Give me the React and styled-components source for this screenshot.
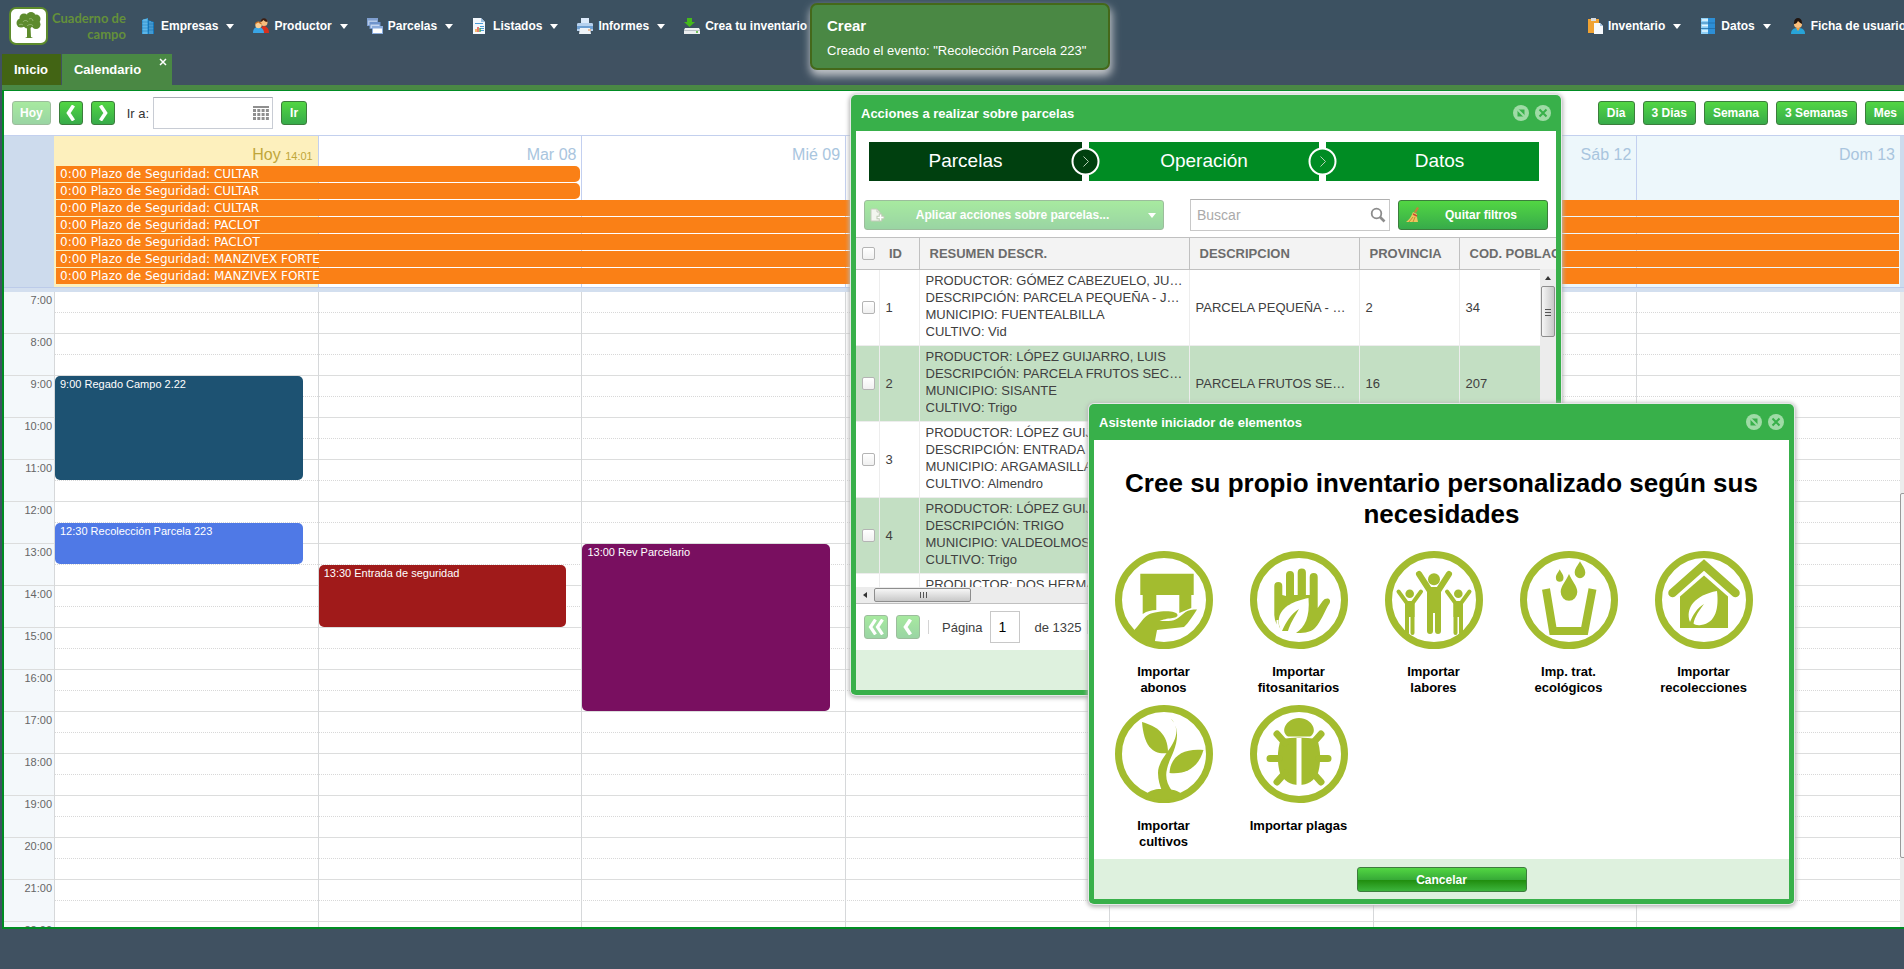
import React from 'react'
import styled, { createGlobalStyle } from 'styled-components'

const GlobalStyle = createGlobalStyle`
  * {
    box-sizing: border-box;
  }
  body {
    margin: 0;
    overflow: hidden;
    background: #405161;
    font-family: "Liberation Sans", Arial, sans-serif;
    font-size: 13px;
  }
  button, input {
    font-family: inherit;
  }
  button {
    cursor: pointer;
  }
`

/* ---------- layout ---------- */

const Page = styled.div`
  width: calc(100% + 15px);
  height: 100vh;
  display: flex;
  flex-direction: column;
  padding-bottom: 40px;
`

const Header = styled.header`
  display: flex;
  align-items: center;
  height: 50px;
  flex: none;
  padding: 2px 13px 0 9px;
  background: #3c5161;
`

const Logo = styled.a`
  display: flex;
  align-items: center;
  gap: 4px;
  width: 131px;
  color: #64903a;
  text-decoration: none;
  text-align: right;
  span {
    font-family: Lato, sans-serif;
    font-size: 13px;
    font-weight: bold;
    line-height: 16px;
    white-space: nowrap;
  }
`

const Menu = styled.nav`
  display: flex;
  gap: 19px;
  &:last-child {
    margin-left: auto;
  }
`

const MenuButton = styled.button`
  display: flex;
  align-items: center;
  height: 24px;
  padding: 0;
  border: 0;
  background: none;
  color: #fff;
  font-size: 12px;
  font-weight: bold;
  white-space: nowrap;
  svg {
    margin-right: 5px;
  }
`

const Arrow = styled.span`
  margin-left: 8px;
  border: 4px solid transparent;
  border-top: 5px solid #fff;
  border-bottom: 0;
`

const Tabs = styled.div`
  display: flex;
  align-items: flex-end;
  gap: 1px;
  height: 40px;
  flex: none;
  margin-left: 2px;
  border-bottom: 5px solid #4a8844;
`

const Tab = styled.button`
  display: flex;
  height: 31px;
  padding: 0 13px 0 12px;
  border: 0;
  background: ${(props) => (props.$active ? '#4a8844' : '#426414')};
  color: #fff;
  font-size: 13px;
  font-weight: bold;
  line-height: 31px;
  svg {
    margin: 4px -8px 0 18px;
  }
`

const Panel = styled.main`
  flex: 1;
  min-height: 0;
  display: flex;
  flex-direction: column;
  margin-left: 2px;
  border: 2px solid #008c23;
  border-top-width: 1px;
  background: #fff;
  overflow: hidden;
`

/* ---------- controls ---------- */

const Button = styled.button`
  display: flex;
  align-items: center;
  justify-content: center;
  height: ${(props) => (props.$tall ? 30 : 24)}px;
  min-width: 24px;
  padding: 0 ${(props) => (props.$icon ? 0 : 8)}px;
  border: 1px solid #3c7d3c;
  border-radius: 3px;
  background: linear-gradient(#52d643, #37ab4a);
  color: #fff;
  font-size: 12px;
  font-weight: bold;
  white-space: nowrap;
  opacity: ${(props) => (props.disabled ? 0.5 : 1)};
`

const TodayButton = styled(Button)`
  padding: 0 7px;
`

const Toolbar = styled.div`
  display: flex;
  align-items: center;
  gap: 8px;
  height: 44px;
  flex: none;
  padding: 0 11px 0 8px;
  color: #333;
  label {
    margin: 0 -4px 0 4px;
  }
`

const DateBox = styled.div`
  display: flex;
  align-items: center;
  width: 120px;
  height: 32px;
  padding-right: 3px;
  border: 1px solid #c8ccd4;
  border-top-color: #a8acb4;
  input {
    flex: 1;
    min-width: 0;
    height: 28px;
    border: 0;
    outline: 0;
  }
  button {
    display: flex;
    padding: 0;
    border: 0;
    background: none;
  }
`

const Views = styled.div`
  display: flex;
  gap: 8px;
  margin-left: auto;
`

/* ---------- calendar ---------- */

const AllDay = styled.section`
  display: grid;
  grid-template-columns: 50px repeat(7, minmax(0, 1fr)) 17px;
  grid-template-rows: 30px repeat(7, 17px) 2px;
  flex: none;
  border-top: 1px solid #c3d0ee;
  border-bottom: 1px solid #bccbe9;
  background: #cddbed;
`

const DayHead = styled.div`
  grid-row: 1 / -1;
  grid-column: ${(props) => props.$day + 2};
  padding: 9px 5px 0 0;
  border-left: ${(props) => (props.$day ? '1px solid #c3d0f0' : 0)};
  background: ${(props) => props.$bg || '#fff'};
  color: ${(props) => (props.$day ? '#a9c5de' : '#c0a63a')};
  font-size: 16px;
  line-height: 19px;
  text-align: right;
  small {
    font-size: 11px;
  }
`

const Bar = styled.div`
  grid-column: 2 / ${(props) => (props.$short ? 4 : 9)};
  grid-row: ${(props) => props.$row};
  height: 16px;
  margin: 0 1px 1px 2px;
  padding-left: 4px;
  border-radius: ${(props) => (props.$short ? '0 5px 5px 0' : 0)};
  background: #fa8016;
  color: #fff;
  font-family: "DejaVu Sans", Verdana, sans-serif;
  font-size: 12px;
  line-height: 17px;
`

const Scroller = styled.section`
  flex: 1;
  min-height: 0;
  display: flex;
  border-top: 4px solid #d3dfef;
`

const Schedule = styled.div`
  flex: 1;
  display: grid;
  align-self: flex-start;
  grid-template-columns: 50px repeat(7, minmax(0, 1fr));
  grid-template-rows: repeat(32, 21px);
`

const Gutter = styled.div`
  grid-column: 1;
  grid-row: 1 / -1;
  background: #f4f8fb;
`

const Hour = styled.div`
  grid-column: 1 / -1;
  grid-row: ${(props) => props.$row} / span 2;
  width: 100%;
  padding: 2px 0 0;
  border-bottom: 1px solid #dcdddd;
  span {
    display: block;
    width: 48px;
    color: #666;
    font-size: 11px;
    line-height: 13px;
    text-align: right;
  }
`

const HalfHour = styled.div`
  grid-column: 2 / -1;
  grid-row: ${(props) => props.$row};
  border-bottom: 1px dotted #d8d8d8;
`

const DayLine = styled.div`
  grid-column: ${(props) => props.$day + 2};
  grid-row: 1 / -1;
  border-left: 1px solid #d6d8da;
`

const Event = styled.div`
  grid-column: ${(props) => props.$day + 2};
  grid-row: ${(props) => props.$start} / span ${(props) => props.$span};
  margin: 0 15px 1px 1px;
  padding: 2px 5px;
  border-radius: 5px;
  background: ${(props) => props.$color};
  color: #fff;
  font-size: 11px;
  line-height: 13px;
`

const ScrollTrack = styled.div`
  display: flex;
  width: 17px;
  background: #ececec;
`

const ScrollThumb = styled.div`
  flex: 1;
  height: 365px;
  margin-top: 201px;
  border: 1px solid #9a9a9a;
  border-radius: 2px;
  background: #f4f4f4;
`

/* ---------- floating pieces ---------- */

const Toast = styled.div`
  position: absolute;
  top: 3px;
  left: 810px;
  width: 300px;
  height: 67px;
  padding: 12px 15px;
  border: 2px solid #44681a;
  border-radius: 7px;
  background: #4a8844;
  box-shadow: 1px 5px 9px 1px #c0c4c8;
  color: #fff;
  h2 {
    margin: 0 0 8px;
    font-size: 15px;
    line-height: 17px;
  }
  p {
    margin: 0;
    line-height: 18px;
  }
`

const Window = styled.section`
  position: absolute;
  isolation: isolate;
  top: ${(props) => props.$top}px;
  left: ${(props) => props.$left}px;
  width: ${(props) => props.$width}px;
  height: ${(props) => props.$height}px;
  display: flex;
  flex-direction: column;
  border: 5px solid #38b04a;
  border-top: 0;
  border-radius: 5px;
  background: #fff;
  box-shadow: 0 0 0 1px #e6e8e8, 0 1px 4px 2px #b4b4b4;
`

const WindowTitle = styled.header`
  display: flex;
  align-items: center;
  gap: 6px;
  height: 36px;
  flex: none;
  padding: 0 5px;
  background: #38b04a;
  color: #fff;
  h2 {
    flex: 1;
    margin: 0;
    font-size: 13px;
  }
  button {
    display: flex;
    padding: 0;
    border: 0;
    background: none;
  }
`

const WindowFooter = styled.footer`
  display: flex;
  justify-content: center;
  flex: none;
  height: 40px;
  padding-top: 8px;
  background: #def1de;
`

const Steps = styled.ol`
  display: grid;
  grid-template-columns: 213fr 7px 230fr 7px 213fr;
  flex: none;
  height: 39px;
  margin: 11px 17px 19px 13px;
  padding: 0;
  list-style: none;
  svg {
    margin: 0 -11px;
    z-index: 1;
  }
`

const Step = styled.li`
  background: ${(props) => (props.$active ? '#00400f' : '#008c23')};
  color: #fff;
  font-size: 19px;
  line-height: 37px;
  text-align: center;
  &:first-child {
    padding-right: 20px;
  }
  &:last-child {
    padding-left: 14px;
  }
`

const FilterBar = styled.div`
  display: flex;
  align-items: center;
  flex: none;
  height: 30px;
  margin: 0 8px 7px;
`

const ActionsButton = styled(Button)`
  width: 300px;
  padding: 0 7px 0 4px;
  justify-content: space-between;
`

const FiltersButton = styled(Button)`
  width: 150px;
  padding: 0 30px 0 6px;
  justify-content: space-between;
`

const SearchBox = styled.div`
  display: flex;
  align-items: center;
  width: 200px;
  height: 32px;
  margin: 0 8px 0 auto;
  padding: 0 3px 0 6px;
  border: 1px solid #c8c8c8;
  border-top-color: #b0b0b0;
  input {
    flex: 1;
    min-width: 0;
    padding: 0;
    border: 0;
    outline: 0;
    font-size: 14px;
    &::placeholder {
      color: #aaa;
    }
  }
`

const TableArea = styled.div`
  display: grid;
  grid-template-rows: minmax(0, 1fr);
  flex: 1;
  min-height: 0;
  overflow: hidden;
  > * {
    grid-area: 1 / 1;
  }
`

const Table = styled.table`
  align-self: start;
  width: 100%;
  table-layout: fixed;
  border-collapse: collapse;
  color: #404040;
  th {
    height: 32px;
    padding: 0 0 0 10px;
    border: 1px solid #c0c0c0;
    border-width: 1px 0 1px 1px;
    background: #f3f3f3;
    color: #6c6c6c;
    font-size: 13px;
    text-align: left;
    white-space: nowrap;
    overflow: hidden;
  }
  th:first-child, th:nth-child(2) {
    border-left: 0;
  }
  td {
    height: 76px;
    padding: 0 6px;
    border: 1px solid #ededed;
    border-width: 0 0 1px 1px;
    line-height: 17px;
    white-space: nowrap;
    overflow: hidden;
    text-overflow: ellipsis;
  }
  td:nth-child(3) {
    padding-bottom: 3px;
  }
  th:first-child, td:first-child {
    padding: 0;
  }
  td:first-child {
    border-left: 0;
  }
  tbody tr:nth-child(even) {
    background: #c3dfc3;
  }
  td div {
    overflow: hidden;
    text-overflow: ellipsis;
  }
`

const Check = styled.input`
  appearance: none;
  display: block;
  width: 13px;
  height: 13px;
  margin: 0 0 0 6px;
  border: 1px solid #b4b4b4;
  border-radius: 2px;
  background: linear-gradient(#fff, #f0f0f0);
`

const VerticalScroll = styled.div`
  justify-self: end;
  display: flex;
  flex-direction: column;
  align-items: center;
  width: 16px;
  margin-top: 32px;
  background: #ececec;
  z-index: 1;
`

const Thumb = styled.div`
  display: flex;
  align-items: center;
  justify-content: center;
  width: ${(props) => props.$width}px;
  height: ${(props) => props.$height}px;
  border: 1px solid #8e8e8e;
  border-radius: 2px;
  background: linear-gradient(${(props) => props.$angle}deg, #f6f6f6, #c8c8c8);
`

const HorizontalScroll = styled.div`
  display: flex;
  align-items: center;
  flex: none;
  height: 17px;
  border-bottom: 1px solid #c0c0c0;
  background: #ececec;
`

const ArrowCell = styled.span`
  display: flex;
  align-items: center;
  justify-content: center;
  flex: none;
  width: 18px;
  height: 17px;
`

const Paging = styled.div`
  display: flex;
  align-items: center;
  gap: 8px;
  flex: none;
  height: 46px;
  padding-left: 8px;
  color: #404040;
  label {
    margin-left: 5px;
  }
  span {
    margin: 0 -2px 0 6px;
  }
  input {
    width: 30px;
    height: 32px;
    padding: 0 0 0 7px;
    border: 1px solid #c8c8c8;
    font-size: 14px;
  }
`

const Separator = styled.i`
  width: 1px;
  height: 14px;
  background: #d4d4d4;
`

const WizardTitle = styled.h1`
  flex: none;
  margin: 28px 20px 20px;
  color: #000;
  font-size: 26px;
  line-height: 31px;
  text-align: center;
`

const Wizard = styled.div`
  flex: 1;
  display: grid;
  grid-template-columns: repeat(5, 135px);
  grid-auto-rows: 154px;
  padding-left: 2px;
`

const WizardItem = styled.button`
  display: flex;
  flex-direction: column;
  align-items: center;
  gap: 14px;
  padding: 0;
  border: 0;
  background: none;
  color: #000;
  font-size: 13px;
  font-weight: bold;
  line-height: 16px;
`

const CancelButton = styled(Button)`
  width: 170px;
  height: 25px;
  background: linear-gradient(#52d643, #37ab37 50%, #1f8c0c 51%, #3cb43c);
`

/* ---------- drawings ---------- */

const icons = {
  building: (
    <>
      <path d="M2 2l6-2v16H2z" fill="#3da3e0" />
      <path d="M8 2l6 2v12H8z" fill="#1679bd" />
      <path d="M4 1v15M6 1v15M10 3v13M12 4v12" stroke="#9ad8f8" strokeWidth=".7" />
      <path d="M2 4h6M2 7h6M2 10h6M2 13h6M8 6h6M8 9h6M8 12h6" stroke="#0d5f9c" strokeWidth=".4" />
    </>
  ),
  people: (
    <>
      <path d="M7 15c0-5 2-7 4-7s5 2 5 7z" fill="#d8301c" />
      <circle cx="11" cy="4.500" r="3.500" fill="#f6bd7d" />
      <path d="M7.500 4c0-5 7-5 7 0-2 0-3-1-4-2-1 1-2 2-3 2z" fill="#3c1e12" />
      <path d="M0 15c0-4 2-6 5-6s6 2 6 6z" fill="#39a5e6" />
      <circle cx="5.500" cy="7" r="3.200" fill="#fbcf95" />
      <path d="M2 6.500c0-4 6-4 7 0-3-1-3-2-4-2z" fill="#c56a1c" />
    </>
  ),
  layers: (
    <>
      <path d="M0 0h11v8H0z" fill="#7f9fd0" />
      <path d="M1 2.500h9V7H1z" fill="#b4c9e8" />
      <path d="M2.500 4h11v7h-11z" fill="#6f94cc" />
      <path d="M3.500 6.500h9V10h-9z" fill="#c4d6f0" />
      <path d="M5 8h11v8H5z" fill="#8aabdc" />
      <path d="M6 10.500h9V15H6z" fill="#fff" />
    </>
  ),
  report: (
    <>
      <path d="M1 0h8l4 4v12H1z" fill="#f4f8fd" />
      <path d="M9 0v4h4z" fill="#9cc0e4" />
      <path d="M3 5.500h8M8 8.500h4M8 10.500h4M8 12.500h4" stroke="#4a9bd8" />
      <path d="M4 14v-3" stroke="#f39b1c" strokeWidth="1.300" />
      <path d="M6 14V9" stroke="#e23a2a" strokeWidth="1.300" />
      <path d="M8 14v-4" stroke="#3fa53a" strokeWidth="1.300" />
    </>
  ),
  printer: (
    <>
      <path d="M4 0h8v6H4z" fill="#dceafa" />
      <path d="M0 6c0-1 1-1 2-1h12c1 0 2 0 2 1v7H0z" fill="#b6d1ee" />
      <path d="M0 8h16v3H0z" fill="#6d9fd2" />
      <path d="M3 10h10l1 6H2z" fill="#eef3f8" />
      <path d="M11 12h3" stroke="#e98d4a" />
    </>
  ),
  drive: (
    <>
      <path d="M3 0h5v4h3L5.500 9 0 4h3z" fill="#45b81c" />
      <path d="M1 10h14l1 2v4H0v-4z" fill="#eceef0" />
      <path d="M0 12.500h16" stroke="#b9c0c6" />
      <circle cx="13" cy="14" r="1" fill="#4ab52a" />
    </>
  ),
  clipboard: (
    <>
      <path d="M1 1h11v14H1z" fill="#f0a232" />
      <path d="M4 0h5v3H4z" fill="#d7dbe0" />
      <path d="M7 5h6l3 3v8H7z" fill="#f7fafd" />
      <path d="M13 5v3h3z" fill="#a7c7e6" />
    </>
  ),
  database: (
    <>
      <path d="M1 0h14v16H1z" fill="#2d8fd6" />
      <path d="M1 0h7v16H1z" fill="#8fd0f6" />
      <path d="M1 5h14M1 10.500h14" stroke="#1f6ca8" strokeWidth=".8" />
      <path d="M2 2h6M2 7.500h6M2 13h6" stroke="#e6f6ff" strokeWidth="1.500" />
    </>
  ),
  user: (
    <>
      <path d="M1 16c0-5 3-6 7-6s7 1 7 6z" fill="#28a4d8" />
      <circle cx="8" cy="6" r="4" fill="#fbc07c" />
      <path d="M4 6c-1-8 9-8 8 0-2-1-3-2-4-3-1 2-2 3-4 3z" fill="#20140e" />
      <path d="M6 10h4l-2 3z" fill="#f39c3c" />
    </>
  ),
  addPage: (
    <>
      <path d="M2 2h6l3 3v9H2z" fill="#e8eee0" stroke="#8a9a78" />
      <path d="M8 2v3h3" fill="none" stroke="#8a9a78" />
      <path d="M11.500 6.500v8M7.500 10.500h8" stroke="#7d9a6c" strokeWidth="3.500" />
      <path d="M11.500 7.500v6M8.500 10.500h6" stroke="#fff" strokeWidth="1.500" />
    </>
  ),
  broom: (
    <>
      <path d="M12 0l2 1-3 5-2-1z" fill="#c0843a" />
      <path d="M8 5l4 2v3l1 5H1c3-2 5-5 7-10z" fill="#edc45e" />
      <path d="M8 7l4 2" stroke="#cc4a34" strokeWidth="1.500" />
      <path d="M4 15l4-5M8 15l2-5" stroke="#b98228" strokeWidth=".8" />
    </>
  ),
  search: (
    <>
      <circle cx="6.500" cy="6.500" r="4.800" fill="none" stroke="#8c8c8c" strokeWidth="1.800" />
      <path d="M10 10l4.500 4.500" stroke="#8c8c8c" strokeWidth="2.600" />
    </>
  ),
  calendar: (
    <>
      <path d="M0 1h16v2H0z" fill="#8f8f8f" />
      <path d="M0 5.500h16M0 9.500h16M0 13.500h16" stroke="#8f8f8f" strokeWidth="3" strokeDasharray="3 1.300" />
    </>
  ),
  restore: (
    <>
      <circle cx="8" cy="8" r="8" fill="#9fdba6" />
      <path d="M4.500 4.500h7v7h-7z" fill="#38b04a" />
      <path d="M3.500 3.500l9 9" stroke="#9fdba6" strokeWidth="2" />
    </>
  ),
  close: (
    <>
      <circle cx="8" cy="8" r="8" fill="#9fdba6" />
      <path d="M4.500 4.500l7 7M11.500 4.500l-7 7" stroke="#38b04a" strokeWidth="2" />
    </>
  ),
  prev: <path d="M10.500 .5L5.500 8l5 7.500" fill="none" stroke="#fff" strokeWidth="3.600" />,
  next: <path d="M5.500 .5l5 7.500-5 7.500" fill="none" stroke="#fff" strokeWidth="3.600" />,
  first: <path d="M7.500 .5L2.500 8l5 7.500M14.500 .5L9.500 8l5 7.500" fill="none" stroke="#fff" strokeWidth="3.200" />,
}

const Icon = ({ name }) => (
  <svg width="16" height="16" viewBox="0 0 16 16" aria-hidden="true">
    {icons[name]}
  </svg>
)

const TreeLogo = () => (
  <svg width="39" height="38" viewBox="0 0 39 38" aria-hidden="true">
    <rect x="1" y="1" width="37" height="36" rx="6" fill="#fff" stroke="#5d8b2c" strokeWidth="2" />
    <path d="M18 20h3.500l.5 10 2 1h-8l2-1z" fill="#5d8b2c" />
    <g fill="#5d8b2c">
      <circle cx="12" cy="16" r="4.500" />
      <circle cx="15" cy="11" r="4.500" />
      <circle cx="22" cy="9.500" r="4.500" />
      <circle cx="27" cy="12" r="4.500" />
      <circle cx="27" cy="17.500" r="4.500" />
      <circle cx="19" cy="16" r="5.500" />
    </g>
    <path d="M14 15c1-2 4-2 5 0M20 12c2-1 4 0 4 2M18 19c2-2 5-2 6 0M10 18c1-1 3-1 4 0" fill="none" stroke="#a9c58a" strokeWidth=".7" />
  </svg>
)

const emblems = {
  abonos: (
    <>
      <path d="M26.300 23.700h53.400V45H77.300v13L65.300 63V45h-23v15c-5 0-9 1-13.600 4V45h-2.400z" />
      <path d="M18 82C27 75 29 64 41 62.500c10-2 22-1.500 22.500 2.500.3 4-11 2.500-18 6h9c8 0 12-5 17-9 3-2 7-2.500 11.500-2.500-4 6-8 13-13 17.500L43 80l-3 16-12-4z" />
    </>
  ),
  fitosanitarios: (
    <>
      <path d="M25.300 36a4 4 0 0 1 8 0v9l3.700 1V25a4 4 0 0 1 8 0v20h3.700V22.500a4 4 0 0 1 8.200 0V45h3.800V27a4 4 0 0 1 8 0v31l5-7c3-4 9-3 7 2C76 60 72 72 66 78c-5 5-13 5-20 5-12 0-20-6-20.700-18z" />
      <path d="M59.500 48c-14 3-27 8-29.500 20-1 6 1 11 3 15h14c9-6 14-16 12.500-35z" fill="#fff" />
      <path d="M33 81c4-9 9-17 17-22-5 9-9 15-11 22z" />
      <path d="M33 84c-3-4-5-9-4.500-14" fill="none" stroke="#fff" strokeWidth="2" />
    </>
  ),
  labores: (
    <>
      <circle cx="50" cy="29.300" r="6" />
      <path d="M35 24l11 17M65 24L54 41M46 40v41M54 40v41" fill="none" stroke="#a3bc2f" strokeWidth="6" strokeLinecap="round" />
      <path d="M43 37h14v26H43z" />
      <circle cx="25.700" cy="43.700" r="4.300" />
      <path d="M14.500 41.500l8 11M37 41.500l-8 11M23 53v30M28.500 53v30" fill="none" stroke="#a3bc2f" strokeWidth="4" strokeLinecap="round" />
      <path d="M21 51h9.500v16H21z" />
      <circle cx="74.300" cy="43.700" r="4.300" />
      <path d="M63 41.500l8 11M85.500 41.500l-8 11M71.500 53v30M77 53v30" fill="none" stroke="#a3bc2f" strokeWidth="4" strokeLinecap="round" />
      <path d="M69.500 51H79v16h-9.500z" />
    </>
  ),
  ecologicos: (
    <>
      <path d="M27 39l7 42h31.500l8-42" fill="none" stroke="#a3bc2f" strokeWidth="8" />
      <path d="M50 24c3 7 8.300 12 8.300 18a8.300 8.700 0 0 1-16.600 0c0-6 5.300-11 8.300-18z" />
      <path d="M40.700 19.300c1 3 3.800 5 3.800 8.500a3.800 4 0 0 1-7.600 0c0-3.500 2.800-5.500 3.800-8.500z" />
      <path d="M61 11.300c2 4 5.300 7 5.300 11.500a5.300 5.400 0 0 1-10.600 0c0-4.500 3.300-7.500 5.300-11.500z" />
    </>
  ),
  recolecciones: (
    <>
      <path d="M18.500 43L50 15l31.500 28" fill="none" stroke="#a3bc2f" strokeWidth="8.500" strokeLinecap="round" strokeLinejoin="miter" />
      <path d="M50 25.500l24 21v31.500H26V46.500z" />
      <path d="M63 41c2 17-1 32-16 34-4 .6-6-.4-7.500-1.500C41 66 45 61 50 54c-7 4-11 11-14 18-5-14 5-27 27-31z" fill="#fff" />
    </>
  ),
  cultivos: (
    <>
      <path d="M28 18c14 4 26 11 26 31-14 2-24-5-26-31z" />
      <path d="M89.500 46c-4 14-14 25-34 23 1-17 14-25 34-23z" />
      <path d="M55 13c8 6 9 16 5 24-5 11-16 20-16 32 0 7 2 13 4 18h10c-5-7-7-14-5-22 2-10 10-20 10-34 0-8-3-14-8-18z" />
      <path d="M30 92c6-7 13-7 20-7s15 1 20 7c-12 5-28 5-40 0z" />
    </>
  ),
  plagas: (
    <>
      <path d="M39 32.500c-8-4-3-18 11-18.500 14 .5 19 14.500 11 18.500z" />
      <path d="M32 35c12-2 24-2 36 0 4 10 4 24 1 34-4 8-10 12-19 12s-15-4-19-12c-3-10-3-24 1-34z" />
      <path d="M28 30l8 9M72 30l-8 9M21 54.500h9M79 54.500h-9M28 78l8-9M72 78l-8-9" stroke="#a3bc2f" strokeWidth="7" strokeLinecap="round" />
      <path d="M50 34v49" stroke="#fff" strokeWidth="5" />
    </>
  ),
}

const Emblem = ({ name }) => (
  <svg width="100" height="100" viewBox="0 0 100 100" fill="#a3bc2f" aria-hidden="true">
    <circle cx="50" cy="50" r="45.500" fill="none" stroke="#a3bc2f" strokeWidth="7" />
    {emblems[name]}
  </svg>
)

const StepArrow = ({ fill }) => (
  <svg width="29" height="39" viewBox="0 0 29 39" aria-hidden="true">
    <circle cx="14.500" cy="19.500" r="13" fill={fill} stroke="#fff" strokeWidth="2" />
    <path d="M12.500 14.500l5 5-5 5" fill="none" stroke="#b5cfb5" strokeWidth="1" />
  </svg>
)

const Grip = ({ vertical }) => (
  <svg width="8" height="8" viewBox="0 0 8 8" aria-hidden="true">
    <path d={vertical ? 'M1 1.500h6M1 4.500h6M1 7.500h6' : 'M1.500 1v6M4.500 1v6M7.500 1v6'} stroke="#555" />
  </svg>
)

/* ---------- data ---------- */

const mainMenu = [
  ['building', 'Empresas', true],
  ['people', 'Productor', true],
  ['layers', 'Parcelas', true],
  ['report', 'Listados', true],
  ['printer', 'Informes', true],
  ['drive', 'Crea tu inventario', false],
]

const userMenu = [
  ['clipboard', 'Inventario', true],
  ['database', 'Datos', true],
  ['user', 'Ficha de usuario', false],
]

const days = ['Hoy', 'Mar 08', 'Mié 09', 'Jue 10', 'Vie 11', 'Sáb 12', 'Dom 13']

const bars = ['CULTAR', 'CULTAR', 'CULTAR', 'PACLOT', 'PACLOT', 'MANZIVEX FORTE', 'MANZIVEX FORTE']

const hours = Array.from({ length: 16 }, (_, i) => i + 7)

// start and span are counted in half hours from 7:00
const events = [
  { day: 0, start: 5, span: 5, color: '#1d5272', text: '9:00 Regado Campo 2.22' },
  { day: 0, start: 12, span: 2, color: '#4f79e6', text: '12:30 Recolección Parcela 223' },
  { day: 1, start: 14, span: 3, color: '#a01a1a', text: '13:30 Entrada de seguridad' },
  { day: 2, start: 13, span: 8, color: '#790f60', text: '13:00 Rev Parcelario' },
]

const plots = [
  {
    id: 1,
    lines: ['PRODUCTOR: GÓMEZ CABEZUELO, JUAN', 'DESCRIPCIÓN: PARCELA PEQUEÑA - JUNTO', 'MUNICIPIO: FUENTEALBILLA', 'CULTIVO: Vid'],
    description: 'PARCELA PEQUEÑA - MONTE',
    province: 2,
    town: 34,
  },
  {
    id: 2,
    lines: ['PRODUCTOR: LÓPEZ GUIJARRO, LUIS', 'DESCRIPCIÓN: PARCELA FRUTOS SECOS', 'MUNICIPIO: SISANTE', 'CULTIVO: Trigo'],
    description: 'PARCELA FRUTOS SECOS',
    province: 16,
    town: 207,
  },
  {
    id: 3,
    lines: ['PRODUCTOR: LÓPEZ GUIJARRO, LUIS', 'DESCRIPCIÓN: ENTRADA', 'MUNICIPIO: ARGAMASILLA', 'CULTIVO: Almendro'],
  },
  {
    id: 4,
    lines: ['PRODUCTOR: LÓPEZ GUIJARRO, LUIS', 'DESCRIPCIÓN: TRIGO', 'MUNICIPIO: VALDEOLMOS', 'CULTIVO: Trigo'],
  },
  {
    id: 5,
    lines: ['PRODUCTOR: DOS HERMANAS', 'DESCRIPCIÓN: TRIGO', 'MUNICIPIO: SISANTE', 'CULTIVO: Trigo'],
  },
]

const wizard = [
  ['abonos', 'Importar', 'abonos'],
  ['fitosanitarios', 'Importar', 'fitosanitarios'],
  ['labores', 'Importar', 'labores'],
  ['ecologicos', 'Imp. trat.', 'ecológicos'],
  ['recolecciones', 'Importar', 'recolecciones'],
  ['cultivos', 'Importar', 'cultivos'],
  ['plagas', 'Importar plagas'],
]

/* ---------- components ---------- */

const MenuList = ({ items }) => (
  <Menu>
    {items.map(([icon, text, arrow]) => (
      <MenuButton key={text}>
        <Icon name={icon} />
        {text}
        {arrow && <Arrow />}
      </MenuButton>
    ))}
  </Menu>
)

const WindowHeader = ({ title }) => (
  <WindowTitle>
    <h2>{title}</h2>
    <button aria-label="Restaurar"><Icon name="restore" /></button>
    <button aria-label="Cerrar"><Icon name="close" /></button>
  </WindowTitle>
)

const Calendar = () => (
  <>
    <Toolbar>
      <TodayButton disabled>Hoy</TodayButton>
      <Button $icon aria-label="Anterior"><Icon name="prev" /></Button>
      <Button $icon aria-label="Siguiente"><Icon name="next" /></Button>
      <label htmlFor="goto">Ir a:</label>
      <DateBox>
        <input id="goto" type="text" />
        <button aria-label="Calendario"><Icon name="calendar" /></button>
      </DateBox>
      <Button>Ir</Button>
      <Views>
        <Button>Dia</Button>
        <Button>3 Dias</Button>
        <Button>Semana</Button>
        <Button>3 Semanas</Button>
        <Button>Mes</Button>
      </Views>
    </Toolbar>
    <AllDay>
      {days.map((day, i) => (
        <DayHead key={day} $day={i} $bg={i === 0 ? '#fdf0bd' : i > 4 ? '#edf7fb' : undefined}>
          {day} {i === 0 && <small>14:01</small>}
        </DayHead>
      ))}
      {bars.map((bar, i) => (
        <Bar key={i} $row={i + 2} $short={i < 2}>0:00 Plazo de Seguridad: {bar}</Bar>
      ))}
    </AllDay>
    <Scroller>
      <Schedule>
        <Gutter />
        {hours.map((hour, i) => (
          <React.Fragment key={hour}>
            <HalfHour $row={i * 2 + 1} />
            <Hour $row={i * 2 + 1}><span>{hour}:00</span></Hour>
          </React.Fragment>
        ))}
        {days.map((day, i) => <DayLine key={day} $day={i} />)}
        {events.map((event) => (
          <Event key={event.text} $day={event.day} $start={event.start} $span={event.span} $color={event.color}>
            {event.text}
          </Event>
        ))}
      </Schedule>
      <ScrollTrack><ScrollThumb /></ScrollTrack>
    </Scroller>
  </>
)

const PlotsWindow = () => (
  <Window $top={95} $left={851} $width={710} $height={600}>
    <WindowHeader title="Acciones a realizar sobre parcelas" />
    <Steps>
      <Step $active>Parcelas</Step>
      <StepArrow fill="#00400f" />
      <Step>Operación</Step>
      <StepArrow fill="#008c23" />
      <Step>Datos</Step>
    </Steps>
    <FilterBar>
      <ActionsButton $tall disabled>
        <Icon name="addPage" />
        Aplicar acciones sobre parcelas...
        <Arrow />
      </ActionsButton>
      <SearchBox>
        <input type="text" placeholder="Buscar" aria-label="Buscar" />
        <Icon name="search" />
      </SearchBox>
      <FiltersButton $tall>
        <Icon name="broom" />
        Quitar filtros
      </FiltersButton>
    </FilterBar>
    <TableArea>
      <Table>
        <colgroup>
          <col width="23" />
          <col width="40" />
          <col width="270" />
          <col width="170" />
          <col width="100" />
          <col />
        </colgroup>
        <thead>
          <tr>
            <th><Check type="checkbox" aria-label="Todas" /></th>
            <th>ID</th>
            <th>RESUMEN DESCR.</th>
            <th>DESCRIPCION</th>
            <th>PROVINCIA</th>
            <th>COD. POBLACION</th>
          </tr>
        </thead>
        <tbody>
          {plots.map((plot) => (
            <tr key={plot.id}>
              <td><Check type="checkbox" aria-label={`Parcela ${plot.id}`} /></td>
              <td>{plot.id}</td>
              <td>{plot.lines.map((line) => <div key={line}>{line}</div>)}</td>
              <td>{plot.description}</td>
              <td>{plot.province}</td>
              <td>{plot.town}</td>
            </tr>
          ))}
        </tbody>
      </Table>
      <VerticalScroll>
        <ArrowCell>
          <svg width="6" height="4" viewBox="0 0 6 4"><path d="M0 4l3-4 3 4z" fill="#333" /></svg>
        </ArrowCell>
        <Thumb $width={14} $height={51} $angle={90}><Grip vertical /></Thumb>
      </VerticalScroll>
    </TableArea>
    <HorizontalScroll>
      <ArrowCell>
        <svg width="4" height="6" viewBox="0 0 4 6"><path d="M4 0L0 3l4 3z" fill="#333" /></svg>
      </ArrowCell>
      <Thumb $width={97} $height={14} $angle={180}><Grip /></Thumb>
    </HorizontalScroll>
    <Paging>
      <Button $icon disabled aria-label="Primera"><Icon name="first" /></Button>
      <Button $icon disabled aria-label="Anterior"><Icon name="prev" /></Button>
      <Separator />
      <label htmlFor="page">Página</label>
      <input id="page" type="text" defaultValue="1" />
      <span>de 1325</span>
      <Separator />
    </Paging>
    <WindowFooter />
  </Window>
)

const WizardWindow = () => (
  <Window $top={404} $left={1089} $width={705} $height={500}>
    <WindowHeader title="Asistente iniciador de elementos" />
    <WizardTitle>Cree su propio inventario personalizado según sus necesidades</WizardTitle>
    <Wizard>
      {wizard.map(([name, first, second]) => (
        <WizardItem key={name}>
          <Emblem name={name} />
          <span>
            {first}
            {second && <br />}
            {second}
          </span>
        </WizardItem>
      ))}
    </Wizard>
    <WindowFooter>
      <CancelButton>Cancelar</CancelButton>
    </WindowFooter>
  </Window>
)

const App = () => {
  return (
    <>
      <GlobalStyle />
      <Page>
        <Header>
          <Logo href="#">
            <TreeLogo />
            <span>Cuaderno de<br />campo</span>
          </Logo>
          <MenuList items={mainMenu} />
          <MenuList items={userMenu} />
        </Header>
        <Tabs>
          <Tab>Inicio</Tab>
          <Tab $active>
            Calendario
            <svg width="8" height="8" viewBox="0 0 8 8" aria-hidden="true">
              <path d="M1 1l6 6M7 1L1 7" stroke="#fff" strokeWidth="1.500" />
            </svg>
          </Tab>
        </Tabs>
        <Panel>
          <Calendar />
        </Panel>
      </Page>
      <PlotsWindow />
      <WizardWindow />
      <Toast role="status">
        <h2>Crear</h2>
        <p>Creado el evento: "Recolección Parcela 223"</p>
      </Toast>
    </>
  )
}

export default App
